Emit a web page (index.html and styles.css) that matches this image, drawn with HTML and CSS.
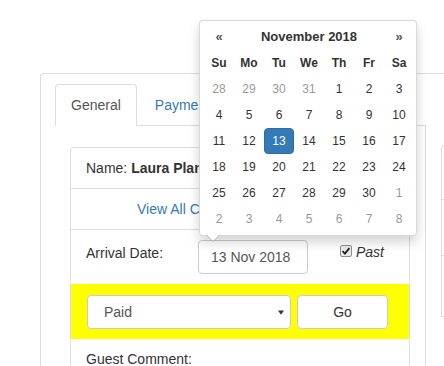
FILE: index.html
```html
<!DOCTYPE html>
<html>
<head>
<meta charset="utf-8">
<link rel="stylesheet" href="styles.css">
</head>
<body>
<div class="page">
  <div class="outer">
    <div class="left-col">
      <ul class="tabs">
        <li class="tab active">General</li>
        <li class="tab"><span class="link clip-tab">Payments</span></li>
      </ul>
      <div class="tab-content">
        <div class="panel">
          <div class="row row-name"><span class="clip clip-name">Name: <b>Laura Plante</b></span></div>
          <div class="row row-link"><span class="link clip clip-link">View All Comments</span></div>
          <div class="row-arrival">
            <div class="label">Arrival Date:</div>
            <div class="date-input">13 Nov 2018</div>
            <div class="past">
              <span class="check"><svg width="12" height="12" viewBox="0 0 12 12"><rect x="0.5" y="0.5" width="11" height="11" rx="1.5" fill="#e9e9e9" stroke="#8f8f8f"/><path d="M2.6 6.2 L4.9 8.6 L9.4 3.2" fill="none" stroke="#222" stroke-width="1.8"/></svg></span>
              <i>Past</i>
            </div>
          </div>
          <div class="row-yellow">
            <div class="select">Paid<svg class="caret" width="6" height="5" viewBox="0 0 6 5"><path d="M0 0.5 L6 0.5 L3 4.8 Z" fill="#333"/></svg></div>
            <div class="btn">Go</div>
          </div>
          <div class="row-guest">Guest Comment:</div>
        </div>
      </div>
    </div>
    <div class="right-col">
      <div class="side-panel">
        <div class="side-row r1"></div>
        <div class="side-row r2"></div>
        <div class="side-row r3"></div>
      </div>
    </div>
  </div>

  <div class="datepicker">
    <div class="dp-grid">
      <div class="dp-nav">«</div>
      <div class="dp-title">November 2018</div>
      <div class="dp-nav">»</div>
      <div class="dow">Su</div><div class="dow">Mo</div><div class="dow">Tu</div><div class="dow">We</div><div class="dow">Th</div><div class="dow">Fr</div><div class="dow">Sa</div>
      <div class="day old">28</div><div class="day old">29</div><div class="day old">30</div><div class="day old">31</div><div class="day">1</div><div class="day">2</div><div class="day">3</div>
      <div class="day">4</div><div class="day">5</div><div class="day">6</div><div class="day">7</div><div class="day">8</div><div class="day">9</div><div class="day">10</div>
      <div class="day">11</div><div class="day">12</div><div class="day active">13</div><div class="day">14</div><div class="day">15</div><div class="day">16</div><div class="day">17</div>
      <div class="day">18</div><div class="day">19</div><div class="day">20</div><div class="day">21</div><div class="day">22</div><div class="day">23</div><div class="day">24</div>
      <div class="day">25</div><div class="day">26</div><div class="day">27</div><div class="day">28</div><div class="day">29</div><div class="day">30</div><div class="day old">1</div>
      <div class="day old">2</div><div class="day old">3</div><div class="day old">4</div><div class="day old">5</div><div class="day old">6</div><div class="day old">7</div><div class="day old">8</div>
    </div>
  </div>
</div>
</body>
</html>
```

FILE: styles.css
```css
* { box-sizing: border-box; }
html, body {
  margin: 0;
  padding: 0;
  overflow: hidden;
}
body {
  width: 444px;
  height: 366px;
  background: #fff;
  font-family: "Liberation Sans", Arial, sans-serif;
  font-size: 14px;
  line-height: 20px;
  color: #333;
}
.page {
  position: relative;
  height: 366px;
  overflow: hidden;
  padding: 73px 0 0 40px;
}
.outer {
  display: flex;
  width: 404px;
  height: 293px;
  overflow: hidden;
  border: 1px solid #ddd;
  border-right: none;
  border-bottom: none;
  border-radius: 4px 0 0 0;
  padding: 10px 0 0 14px;
}
.left-col {
  flex: none;
  width: 371px;
}
.tabs {
  display: flex;
  margin: 0;
  padding: 0;
  list-style: none;
  border-bottom: 1px solid #ddd;
}
.tab {
  margin-right: 2px;
  margin-bottom: -1px;
  padding: 10px 15px;
  border: 1px solid transparent;
  border-radius: 4px 4px 0 0;
  white-space: nowrap;
}
.tab.active {
  color: #555;
  background: #fff;
  border-color: #ddd;
  border-bottom-color: #fff;
}
.link { color: #337ab7; }
.clip {
  display: inline-block;
  overflow: hidden;
  white-space: nowrap;
  vertical-align: top;
}
.clip-tab {
  display: inline-block;
  width: 45px;
  overflow: hidden;
  vertical-align: top;
}
.clip-name { width: 113px; }
.clip-link { width: 62px; }
.tab-content {
  height: 300px;
  border-right: 1px solid #ddd;
  padding: 21px 15px 0 15px;
}
.panel {
  border: 1px solid #ddd;
  border-radius: 4px;
}
.row {
  padding: 10px 15px;
  border-bottom: 1px solid #ddd;
  white-space: nowrap;
}
.row-link { padding-left: 66px; }
.row-arrival {
  display: flex;
  align-items: flex-start;
  padding: 10px 15px;
}
.label {
  width: 112px;
  padding-top: 3px;
  flex: none;
}
.date-input {
  flex: none;
  width: 110px;
  height: 34px;
  border: 1px solid #ccc;
  border-radius: 4px;
  padding: 6px 12px;
  color: #555;
}
.past {
  display: flex;
  align-items: center;
  margin-left: 32px;
  padding-top: 2px;
}
.check {
  display: flex;
  margin-right: 4px;
  margin-top: -3px;
}
.row-yellow {
  display: flex;
  gap: 6px;
  background: #ffff00;
  padding: 11px 15px 10px 16px;
}
.select {
  position: relative;
  width: 204px;
  height: 34px;
  border: 1px solid #ccc;
  border-radius: 4px;
  background: #fff;
  padding: 6px 16px;
  color: #555;
}
.caret {
  position: absolute;
  right: 6px;
  top: 14px;
}
.btn {
  width: 91px;
  height: 34px;
  border: 1px solid #ccc;
  border-radius: 4px;
  background: #fff;
  text-align: center;
  padding: 6px 0;
  color: #333;
}
.row-guest {
  padding: 10px 15px;
}
.right-col {
  flex: none;
  padding: 61px 0 0 15px;
}
.side-panel {
  width: 4px;
  border: 1px solid #ddd;
  border-right: none;
  border-radius: 4px 0 0 0;
}
.side-row { border-bottom: 1px solid #ddd; }
.r1 { height: 54px; }
.r2 { height: 56px; }
.r3 { height: 60px; border-bottom: none; }

.datepicker {
  position: absolute;
  left: 199px;
  top: 20px;
  width: 218px;
  padding: 3px 3px 3px 4px;
  background: #fff;
  border: 1px solid rgba(0,0,0,.15);
  border-radius: 4px;
  box-shadow: 0 6px 12px rgba(0,0,0,.175);
}
.datepicker::before,
.datepicker::after {
  content: "";
  position: absolute;
  border-left: 7px solid transparent;
  border-right: 7px solid transparent;
}
.datepicker::before {
  left: 6px;
  bottom: -7px;
  border-top: 7px solid rgba(0,0,0,.2);
}
.datepicker::after {
  left: 7px;
  bottom: -6px;
  border-left-width: 6px;
  border-right-width: 6px;
  border-top: 6px solid #fff;
}
.dp-grid {
  display: grid;
  grid-template-columns: repeat(7, 30px);
  grid-auto-rows: 26px;
  font-size: 12px;
  text-align: center;
  line-height: 26px;
}
.dp-nav {
  font-size: 13px;
  font-weight: bold;
  color: #555;
}
.dp-title {
  grid-column: span 5;
  font-size: 13px;
  font-weight: bold;
}
.dow { font-weight: bold; }
.day { color: #333; border-radius: 4px; }
.day.old { color: #999; }
.day.active {
  background: #337ab7;
  border: 1px solid #2e6da4;
  line-height: 24px;
  color: #fff;
}
```
